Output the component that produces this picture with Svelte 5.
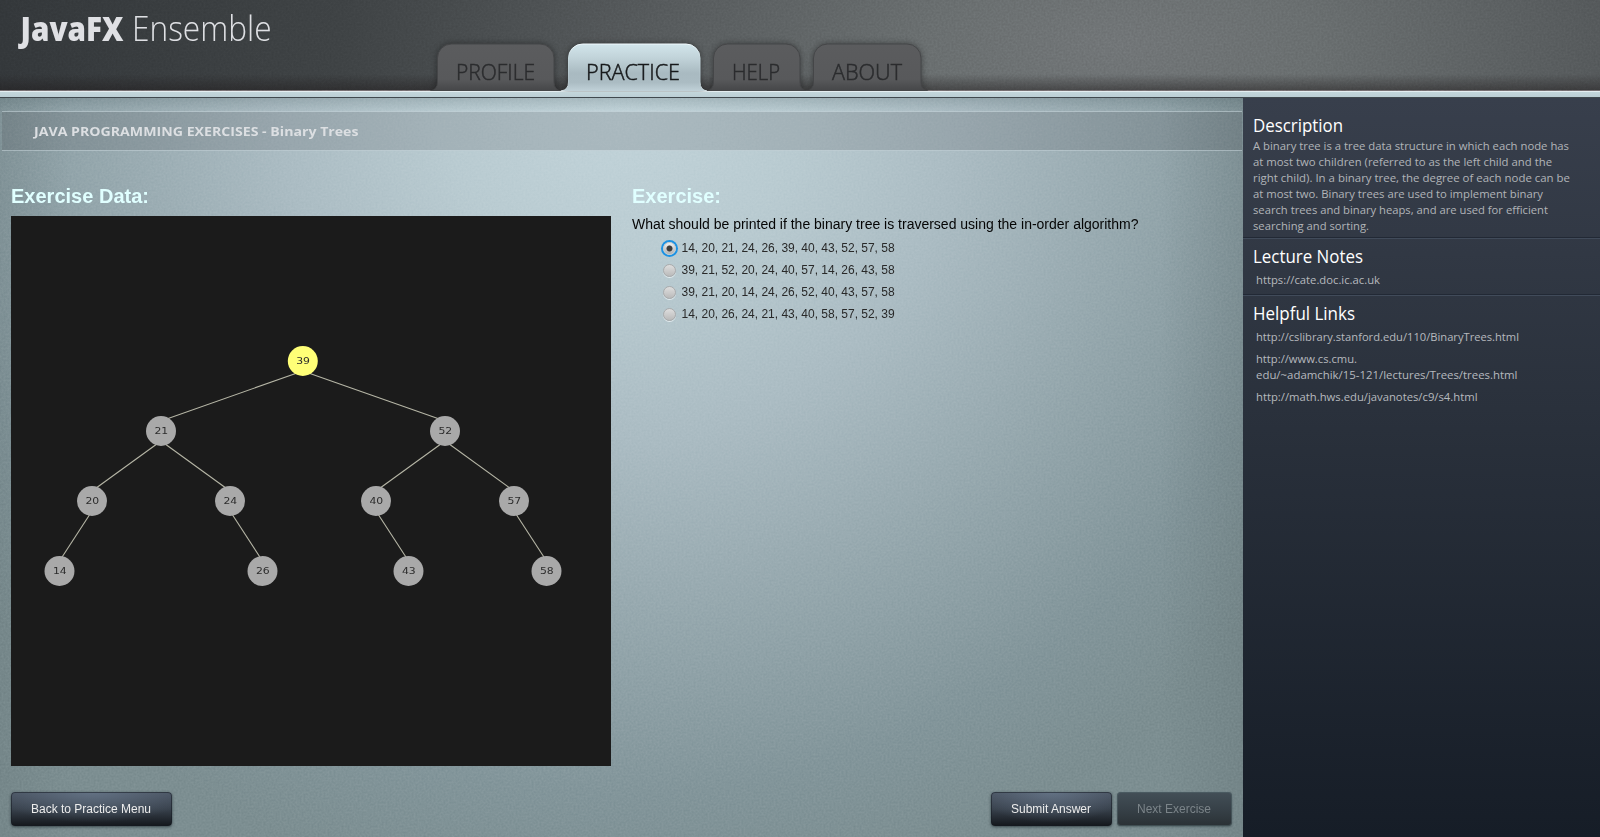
<script>
  const tabs = [
    { label: 'PROFILE', w: 117, tw: 79 },
    { label: 'PRACTICE', w: 132, tw: 94, active: true },
    { label: 'HELP', w: 87, tw: 48 },
    { label: 'ABOUT', w: 108, tw: 70 }
  ];

  const nodes = [
    { v: 39, x: 291.8, y: 145, root: true },
    { v: 21, x: 150, y: 215, p: 0 },
    { v: 52, x: 434, y: 215, p: 0 },
    { v: 20, x: 81, y: 285, p: 1 },
    { v: 24, x: 219, y: 285, p: 1 },
    { v: 40, x: 365, y: 285, p: 2 },
    { v: 57, x: 503, y: 285, p: 2 },
    { v: 14, x: 48.5, y: 355, p: 3 },
    { v: 26, x: 251.5, y: 355, p: 4 },
    { v: 43, x: 397.5, y: 355, p: 5 },
    { v: 58, x: 535.5, y: 355, p: 6 }
  ];
  const edges = nodes.filter((n) => n.p !== undefined).map((n) => ({ a: nodes[n.p], b: n }));

  const options = [
    '14, 20, 21, 24, 26, 39, 40, 43, 52, 57, 58',
    '39, 21, 52, 20, 24, 40, 57, 14, 26, 43, 58',
    '39, 21, 20, 14, 24, 26, 52, 40, 43, 57, 58',
    '14, 20, 26, 24, 21, 43, 40, 58, 57, 52, 39'
  ];
  let selected = $state(0);

  const description = [
    ['A binary tree is a tree data structure in which each node has', 316],
    ['at most two children (referred to as the left child and the', 299],
    ['right child). In a binary tree, the degree of each node can be', 317],
    ['at most two. Binary trees are used to implement binary', 290],
    ['search trees and binary heaps, and are used for efficient', 295],
    ['searching and sorting.', 116]
  ];
  const tabPath = (w) =>
    `M0 48Q7.5 47 7.5 39V15A14 14 0 0 1 21.5 1H${w - 7}A14 14 0 0 1 ${w + 7} 15V39Q${w + 7} 47 ${w + 14} 48`;
</script>

{#snippet line(text, w, size, h, base)}
  <svg class="line" width={w} height={h}><text x="0" y={base} font-size={size} textLength={w} lengthAdjust="spacingAndGlyphs">{text}</text></svg>
{/snippet}

{#snippet grain(id)}
  <svg class="grain" aria-hidden="true">
    <filter {id} x="0" y="0" width="100%" height="100%" color-interpolation-filters="sRGB">
      <feTurbulence type="fractalNoise" baseFrequency="0.5" numOctaves="2" seed="4" />
      <feColorMatrix type="matrix" values="1 0 0 0 0  1 0 0 0 0  1 0 0 0 0  0 0 0 0 1" />
    </filter>
    <rect width="100%" height="100%" filter="url(#{id})" />
  </svg>
{/snippet}

<div class="app">
  <header>
    {@render grain('grain-header')}
    <h1>
      <svg width="270" height="60">
        <text class="bold" x="20.5" y="41" font-size="33.5" textLength="103" lengthAdjust="spacingAndGlyphs">JavaFX</text>
        <text class="light" x="132" y="41" font-size="34.5" textLength="139.5" lengthAdjust="spacingAndGlyphs">Ensemble</text>
      </svg>
    </h1>
    <nav>
      {#each tabs as t}
        <button class="tab" class:active={t.active} style:width="{t.w}px">
          <svg class="shape" width={t.w + 14} height="49">
            <path d={tabPath(t.w)} fill={t.active ? 'url(#tabfill)' : 'url(#tabdark)'} stroke={t.active ? 'url(#tabedge)' : '#454648'} />
          </svg>
          <span>{@render line(t.label, t.tw, 22.3, 30, 21)}</span>
        </button>
      {/each}
    </nav>
    <svg class="defs" width="0" height="0">
      <defs>
        <linearGradient id="tabfill" x1="0" y1="0" x2="0" y2="1">
          <stop offset="0" stop-color="#d2e5eb" />
          <stop offset=".28" stop-color="#c2d4da" />
          <stop offset=".62" stop-color="#a9bac1" />
          <stop offset=".82" stop-color="#abbcc3" />
          <stop offset="1" stop-color="#c0d1d8" />
        </linearGradient>
        <linearGradient id="tabedge" x1="0" y1="0" x2="0" y2="1">
          <stop offset="0" stop-color="#f2fbff" />
          <stop offset=".3" stop-color="#c5d7dd" />
          <stop offset=".75" stop-color="#afc0c7" />
          <stop offset="1" stop-color="#d6e2e6" />
        </linearGradient>
        <linearGradient id="tabdark" x1="0" y1="0" x2="0" y2="1">
          <stop offset="0" stop-color="#5b5c5e" />
          <stop offset=".75" stop-color="#58595b" />
          <stop offset="1" stop-color="#454648" />
        </linearGradient>
      </defs>
    </svg>
  </header>
  <div class="strip"></div>

  <div class="body">
    <main>
      {@render grain('grain-main')}
      <div class="crumb">{@render line('JAVA PROGRAMMING EXERCISES - Binary Trees', 324.5, 13.2, 20, 15)}</div>
      <div class="cols">
        <section class="data">
          <h2>{@render line('Exercise Data:', 138, 20, 24, 18)}</h2>
          <svg class="tree" width="600" height="550">
            {#each edges as e}
              <line x1={e.a.x} y1={e.a.y + 10} x2={e.b.x} y2={e.b.y - 10} />
            {/each}
            {#each nodes as n}
              <circle cx={n.x} cy={n.y} r="15" class:root={n.root} />
              <text x={n.x - 6.6} y={n.y + 3} textLength="13.8" lengthAdjust="spacingAndGlyphs">{n.v}</text>
            {/each}
          </svg>
        </section>
        <section class="quiz">
          <h2>{@render line('Exercise:', 89, 20, 24, 18)}</h2>
          <p>{@render line('What should be printed if the binary tree is traversed using the in-order algorithm?', 506.5, 14, 20, 13)}</p>
          <div class="options">
            {#each options as o, i}
              <label>
                <input type="radio" name="answer" value={i} bind:group={selected} />
                <i class="dot" class:on={selected === i}></i>
                <span>{o}</span>
              </label>
            {/each}
          </div>
        </section>
      </div>
      <footer>
        <button class="btn back">Back to Practice Menu</button>
        <button class="btn submit">Submit Answer</button>
        <button class="btn next" disabled>Next Exercise</button>
      </footer>
    </main>

    <aside>
      <section class="desc">
        <h3>{@render line('Description', 90, 18, 24, 18)}</h3>
        <div class="para">
          {#each description as [t, w]}{@render line(t, w, 11.6, 16, 12)}{/each}
        </div>
      </section>
      <section class="notes">
        <h3>{@render line('Lecture Notes', 110, 18, 24, 18)}</h3>
        <a href="#notes">{@render line('https://cate.doc.ic.ac.uk', 124, 11.6, 16, 12)}</a>
      </section>
      <section class="links">
        <h3>{@render line('Helpful Links', 102, 18, 24, 18)}</h3>
        <a href="#stanford">{@render line('http://cslibrary.stanford.edu/110/BinaryTrees.html', 263, 11.6, 16, 12)}</a>
        <a href="#cmu">
          {@render line('http://www.cs.cmu.', 101, 11.6, 16, 12)}
          {@render line('edu/~adamchik/15-121/lectures/Trees/trees.html', 261.5, 11.6, 16, 12)}
        </a>
        <a href="#hws">{@render line('http://math.hws.edu/javanotes/c9/s4.html', 221.5, 11.6, 16, 12)}</a>
      </section>
    </aside>
  </div>
</div>

<style>
  :global(body) { margin: 0; overflow: hidden; }
  .app {
    width: 1600px;
    height: 837px;
    display: flex;
    flex-direction: column;
    overflow: hidden;
    font-family: 'Open Sans', 'Noto Sans', sans-serif;
  }
  h1, h2, h3, p { margin: 0; font-weight: normal; }
  svg { display: block; overflow: visible; }
  .line text { fill: currentColor; }
  button { font: inherit; border: 0; padding: 0; background: none; }
  .grain {
    position: absolute;
    inset: 0;
    width: 100%;
    height: 100%;
    opacity: 0.08;
    mix-blend-mode: overlay;
    pointer-events: none;
    z-index: -1;
  }
  header, main { position: relative; isolation: isolate; }
  header {
    height: 91px;
    box-sizing: border-box;
    display: flex;
    align-items: flex-start;
    background:
      linear-gradient(to bottom, transparent 74px, rgba(30, 26, 27, 0.48) 90px, #777073 90px),
      radial-gradient(ellipse 1150px 480px at 1120px 45px, #727678 0, #6a6f70 17%, #54585a 44%, #3f4345 68%, #33373a 100%);
  }
  h1 { width: 437px; height: 60px; color: #dfe0e4; }
  h1 text { fill: currentColor; }
  h1 .bold { font-weight: 800; }
  h1 .light { font-weight: 300; }
  nav { display: flex; gap: 13.3px; padding-top: 43px; }
  .tab { position: relative; height: 48px; color: #2b2c2e; font-weight: 300; display: flex; justify-content: center; padding-top: 16px; }
  .shape { position: absolute; left: -7px; top: 0; filter: drop-shadow(0 0 3px rgba(0, 0, 0, 0.4)); clip-path: inset(-8px -8px 1px -8px); }
  .tab span { position: relative; }
  .tab .line text { stroke: currentColor; stroke-width: 0.5px; }
  .tab.active { color: #17191b; z-index: 1; }
  .tab.active .shape { left: -6.5px; clip-path: inset(-8px -8px 0 -8px); }
  .defs { position: absolute; }
  .strip {
    height: 7px;
    flex: none;
    box-sizing: border-box;
    border-bottom: 1px solid #40494e;
    background: linear-gradient(#e4eef1 0, #e4eef1 1px, #c3d6db 1px, #bccfd5 100%);
  }
  .body { flex: 1; display: flex; min-height: 0; }
  main {
    width: 1243px;
    display: flex;
    flex-direction: column;
    background:
      linear-gradient(rgba(60, 80, 85, 0.2), transparent 14px),
      linear-gradient(to right, rgba(90, 105, 108, 0.2), transparent 70px, transparent 1160px, rgba(90, 105, 108, 0.25)),
      radial-gradient(ellipse 810px 810px at 620px 0, #c2d4da 0, #b9cbd1 22%, #abbcc3 42%, #97a9af 63%, #82959a 86%, #7c8e91 100%);
  }
  .crumb {
    margin: 13px 1px 0 2px;
    height: 40px;
    box-sizing: border-box;
    padding: 9px 0 0 32px;
    border: solid rgba(215, 232, 238, 0.5);
    border-width: 1px 0;
    background: rgba(60, 60, 65, 0.17);
    color: #dcdfe2;
    font-weight: 700;
  }
  .cols { display: flex; gap: 21px; padding: 34px 0 0 11px; font-family: 'Liberation Sans', Arial, sans-serif; }
  h2 { height: 31px; color: #e0ffff; font-weight: 700; }
  .data { width: 600px; }
  .tree { background: #1b1b1b; }
  .tree line { stroke: #b6b6a6; stroke-width: 1.1; }
  .tree circle { fill: #a9a9a9; }
  .tree circle.root { fill: #ffff77; }
  .tree text { font: 9.2px 'DejaVu Sans', Verdana, sans-serif; fill: #2c2c2c; }
  .quiz p { height: 21px; color: #050505; }
  .options { padding-left: 29px; }
  label { display: flex; align-items: center; height: 22px; font-size: 12px; color: #292929; letter-spacing: -0.01px; }
  input { position: absolute; opacity: 0; pointer-events: none; }
  .dot {
    width: 13px;
    height: 13px;
    margin: 0 6px 0 1.5px;
    border-radius: 50%;
    box-sizing: border-box;
    border: 1px solid #a9abac;
    background: linear-gradient(#dedede, #bababa);
    box-shadow: 0 1px 0 rgba(240, 246, 248, 0.75);
  }
  .dot.on {
    border-color: #c4ccd0;
    background: radial-gradient(circle, #3c3c3c 0, #3c3c3c 2.6px, transparent 3.4px), linear-gradient(#efefef, #b0b0b0);
    box-shadow: 0 0 0 2px #1c92e4;
  }
  footer { display: flex; padding: 26px 0 0 11px; font-family: 'Liberation Sans', Arial, sans-serif; }
  .btn {
    height: 34px;
    border-radius: 4px;
    padding-right: 1px;
    font-size: 12px;
    color: #ececec;
    background:
      radial-gradient(ellipse 62% 90% at 50% 0, rgba(120, 138, 160, 0.55), transparent),
      linear-gradient(#4a5462, #38414c 50%, #1c2127 88%, #14171b);
    box-shadow: inset 0 0 0 1px rgba(22, 27, 34, 0.55), 0 1px 3px rgba(20, 30, 35, 0.65);
  }
  .back { width: 161px; margin-right: 819px; }
  .submit { width: 121px; margin-right: 5px; }
  .next { width: 115px; color: #7b8489; background: linear-gradient(#434f57, #374148 50%, #2a3135); box-shadow: inset 0 0 0 1px rgba(80, 98, 104, 0.6), 0 1px 2px rgba(30, 45, 50, 0.4); }
  aside { flex: 1; background: linear-gradient(#383f4c, #2a313c 42%, #161d27); color: #b1b4b8; }
  aside section { box-sizing: border-box; padding-left: 10px; border-bottom: 1px solid #222935; }
  aside section + section { border-top: 1px solid #414b5a; }
  h3 { color: #fff; height: 24px; }
  .desc { height: 140px; padding-top: 16px; }
  .notes { height: 57px; padding-top: 6px; }
  aside .links { padding-top: 6px; border-bottom: 0; }
  .notes h3 { height: 26.5px; }
  .links h3 { height: 27px; }
  a { display: block; color: #b6b9be; text-decoration: none; padding-left: 3px; margin-bottom: 6px; }
</style>
